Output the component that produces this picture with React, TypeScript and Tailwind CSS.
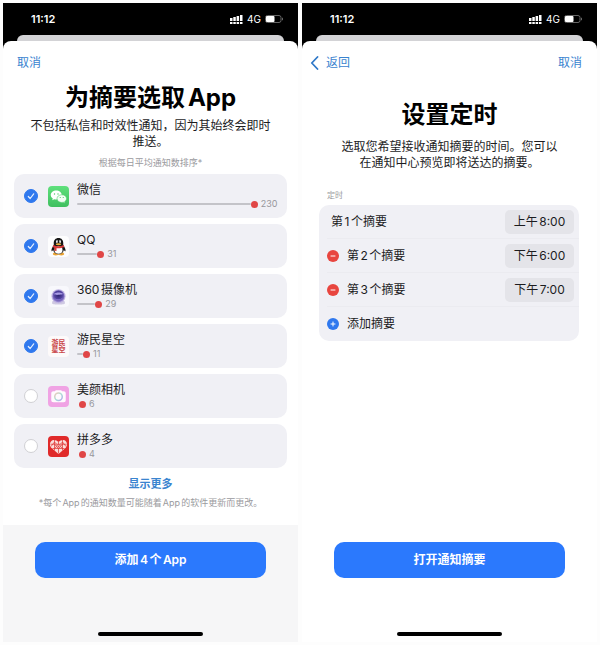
import { useState } from "react";
import type { ReactNode } from "react";

function WeChatIcon() {
  return (
    <svg viewBox="0 0 42 42" className="size-[21px] shrink-0" aria-hidden="true">
      <defs>
        <linearGradient id="wechat-green" x1="0" y1="0" x2="0" y2="1">
          <stop offset="0" stopColor="#5fe07c" />
          <stop offset="1" stopColor="#3fbf5f" />
        </linearGradient>
      </defs>
      <rect width="42" height="42" rx="8" fill="url(#wechat-green)" />
      <path d="M16.500 9C10.500 9 5.500 13 5.500 18c0 2.800 1.500 5.200 4 6.900l-1 3.600 4-2.200c1.300.4 2.600.6 4 .6 6 0 11-4 11-8.900S22.500 9 16.500 9z" fill="#fff" />
      <path d="M27.500 17.500c-5.400 0-9.500 3.400-9.500 7.700s4.100 7.700 9.500 7.700c1.200 0 2.300-.2 3.300-.5l3.300 1.900-.8-3c2.200-1.400 3.700-3.600 3.700-6.100 0-4.300-4.100-7.700-9.500-7.700z" fill="#f3fff5" stroke="#52cd6f" strokeWidth="1.200" />
      <g fill="#4bc968">
        <circle cx="13" cy="16" r="1.400" />
        <circle cx="20" cy="16" r="1.400" />
        <circle cx="24.500" cy="23" r="1.200" />
        <circle cx="30.500" cy="23" r="1.200" />
      </g>
    </svg>
  );
}

function QQIcon() {
  return (
    <svg viewBox="0 0 42 42" className="size-[21px] shrink-0" aria-hidden="true">
      <rect width="42" height="42" rx="8" fill="#fdfdfe" />
      <ellipse cx="15.500" cy="36" rx="6" ry="2.800" fill="#e9a233" />
      <ellipse cx="26.500" cy="36" rx="6" ry="2.800" fill="#e9a233" />
      <path d="M21 4c-6 0-9.500 4.500-9.500 10v4C9 21.500 6.500 26 7 29.500c.3 2 2 .8 3.300-1.300C11.500 33 15 36.500 21 36.500S30.500 33 31.700 28.200c1.300 2.100 3 3.300 3.300 1.300.5-3.500-2-8-4.500-11.500v-4C30.500 8.500 27 4 21 4z" fill="#171717" />
      <ellipse cx="21" cy="28" rx="8" ry="7.500" fill="#fff" />
      <ellipse cx="18" cy="11.500" rx="2" ry="2.900" fill="#fff" />
      <ellipse cx="24" cy="11.500" rx="2" ry="2.900" fill="#fff" />
      <circle cx="18.500" cy="12" r="1" fill="#111" />
      <circle cx="23.500" cy="12" r="1" fill="#111" />
      <ellipse cx="21" cy="16.500" rx="5.500" ry="1.900" fill="#eeb03a" />
      <path d="M10.500 18c6.500 3.500 14.500 3.500 21 0l1 4c-5 2.500-10.500 3-15.500 2.500V30l-4-.5V24c-1.200-.4-2.300-1-3.500-2z" fill="#d93a3a" />
    </svg>
  );
}

function CameraIcon() {
  return (
    <svg viewBox="0 0 42 42" className="size-[21px] shrink-0" aria-hidden="true">
      <defs>
        <radialGradient id="lens-purple" cx=".5" cy=".4" r=".6">
          <stop offset="0" stopColor="#2d2570" />
          <stop offset=".55" stopColor="#51419f" />
          <stop offset="1" stopColor="#a291d8" />
        </radialGradient>
      </defs>
      <rect width="42" height="42" rx="8" fill="#f8f8fc" />
      <path d="M9 30h24l1 4c0 2-3 3-13 3S8 36 8 34z" fill="#cfc9e2" />
      <circle cx="21" cy="20.500" r="14" fill="#bfb3e2" />
      <circle cx="21" cy="20.500" r="12" fill="url(#lens-purple)" />
      <path d="M12 16c4-4 14-4 18 0-4 1.500-7 1-9 1.500S14 18 12 16z" fill="#a99be6" />
      <path d="M13 25c5 2 11 2 16-1-2 5-13 6-16 1z" fill="#8270ca" />
    </svg>
  );
}

function GamerskyIcon() {
  return (
    <span className="flex size-[21px] shrink-0 items-center justify-center rounded-[4px] bg-[#fdfafa]">
      <span className="w-[14px] text-[7px] leading-[7px] font-bold break-all text-[#c9474b]">游民星空</span>
    </span>
  );
}

function BeautyCamIcon() {
  return (
    <svg viewBox="0 0 42 42" className="size-[21px] shrink-0" aria-hidden="true">
      <defs>
        <linearGradient id="ring-pastel" x1="0" y1="0" x2="1" y2="1">
          <stop offset="0" stopColor="#f4c6b8" />
          <stop offset=".5" stopColor="#a9dfd6" />
          <stop offset="1" stopColor="#b3a8ee" />
        </linearGradient>
      </defs>
      <rect width="42" height="42" rx="8" fill="#f0a3e4" />
      <path d="M14 10.500c.6-1.500 1.500-2 3-2h8c1.500 0 2.400.5 3 2h3c3 0 4.500 1.500 4.500 4.500v13c0 3-1.500 4.500-4.500 4.500H11c-3 0-4.500-1.500-4.500-4.500V15c0-3 1.500-4.500 4.500-4.500z" fill="#fffafe" />
      <circle cx="21" cy="21.500" r="7.500" fill="none" stroke="url(#ring-pastel)" strokeWidth="3" />
    </svg>
  );
}

function PinduoduoIcon() {
  return (
    <svg viewBox="0 0 42 42" className="size-[21px] shrink-0" aria-hidden="true">
      <rect width="42" height="42" rx="8" fill="#e02a2a" />
      <path d="M21 36 6.500 23.500C2 18 3.500 9 11.500 8c4 0 7 1.500 9.500 4 2.500-2.500 5.500-4 9.500-4 8 1 9.500 10 5 15.500z" fill="#fbdedb" />
      <g stroke="#df3a38" strokeWidth="1.500" fill="none">
        <path d="M13 8v21M29 8v21M5 16.500h32M9 25h24M13 16.500l8 8.500 8-8.500M13 25l8-8.500 8 8.500M21 25v10M21 12v5" />
        <circle cx="21" cy="20.500" r="3.500" fill="#fbdedb" />
        <path d="m6 21 7-9 4 4M36 21l-7-9-4 4" />
      </g>
      <circle cx="21" cy="20.500" r="1.400" fill="#df3a38" />
    </svg>
  );
}

function StatusBar() {
  return (
    <div className="flex h-8 items-center justify-between pr-[14px] pl-7 text-white">
      <span className="text-[11px] leading-4 font-semibold">11:12</span>
      <div className="flex items-center gap-1">
        <svg viewBox="0 0 13 9" className="h-[9px] w-[13px]" fill="#fff" aria-hidden="true">
          <path d="M0 3h2.500v3H0zM3.300 2h2.500v4H3.300zM6.600 1h2.500v5H6.600zM10 0h2.500v6H10zM0 7h2.500v2H0zM3.300 7h2.500v2H3.300zM6.600 7h2.500v2H6.600zM10 7h2.500v2H10z" />
        </svg>
        <span className="text-[10px] leading-4">4G</span>
        <svg viewBox="0 0 19 8" className="h-2 w-[19px]" aria-hidden="true">
          <rect x=".5" y=".5" width="15.500" height="7" rx="2" fill="none" stroke="#666" />
          <rect x="1" y="1" width="8.500" height="6" rx="1" fill="#fff" />
          <path d="M17 2.500c1.300.4 1.300 2.600 0 3z" fill="#777" />
        </svg>
      </div>
    </div>
  );
}

function Phone({ children, tinted, action }: { children: ReactNode; tinted?: boolean; action: string }) {
  return (
    <section className="flex min-w-0 flex-1 flex-col bg-white">
      <div className="bg-black">
        <StatusBar />
        <div className="mx-[14px] h-[6px] rounded-t-lg bg-[#d3d3d6]" />
        <div className="h-2 rounded-t-lg bg-white" />
      </div>
      <main className="flex flex-1 flex-col">{children}</main>
      <footer className={`flex flex-col items-center px-8 pt-[17px] pb-[6px] ${tinted ? "bg-[#f6f6f7]" : "bg-white"}`}>
        <button
          type="button"
          className="h-9 w-full rounded-[10px] bg-[#2b79fd] text-[12px] leading-4 font-semibold text-white"
        >
          {action}
        </button>
        <div className="mt-[54px] h-1 w-[105px] rounded-full bg-black" />
      </footer>
    </section>
  );
}

const apps = [
  { id: "wechat", name: "微信", count: 230, bar: "86%", on: true, Icon: WeChatIcon },
  { id: "qq", name: "QQ", count: 31, bar: "10%", on: true, Icon: QQIcon },
  { id: "cam360", name: "360摄像机", count: 29, bar: "9%", on: true, Icon: CameraIcon },
  { id: "gamersky", name: "游民星空", count: 11, bar: "3%", on: true, Icon: GamerskyIcon },
  { id: "beauty", name: "美颜相机", count: 6, bar: "1%", on: false, Icon: BeautyCamIcon },
  { id: "pdd", name: "拼多多", count: 4, bar: "1%", on: false, Icon: PinduoduoIcon },
];

function AppRow({ app }: { app: (typeof apps)[number] }) {
  const [on, setOn] = useState(app.on);
  const { Icon } = app;
  return (
    <li>
      <label htmlFor={app.id} className="flex h-11 items-center rounded-[10px] bg-[#f0f0f5] pr-2 pl-[10px]">
        <span className="grid size-[14px] shrink-0 place-items-center">
          <input
            id={app.id}
            type="checkbox"
            checked={on}
            onChange={() => setOn(!on)}
            className="col-start-1 row-start-1 size-[14px] appearance-none rounded-full border border-[#d0d0d4] bg-white checked:border-[#2f78ee] checked:bg-[#2f78ee]"
          />
          {on && (
            <svg viewBox="0 0 14 14" className="pointer-events-none col-start-1 row-start-1 size-[14px]" aria-hidden="true">
              <path d="m4.300 7.500 1.900 2 3.500-4.700" fill="none" stroke="#e6f0ff" strokeWidth="1.200" strokeLinecap="round" strokeLinejoin="round" />
            </svg>
          )}
        </span>
        <span className="mr-2 ml-[10px] flex">
          <Icon />
        </span>
        <span className="flex min-w-0 flex-1 flex-col">
          <span className="text-[12px] leading-4 text-[#1c1c1e]">{app.name}</span>
          <span className="flex h-3 items-center">
            <span
              className={`h-[2px] rounded-full ${app.count < 10 ? "bg-transparent" : "bg-[#c3c3c8]"}`}
              style={{ width: app.bar }}
            />
            <span className="size-[7px] shrink-0 rounded-full bg-[#e04646]" />
            <span className="ml-[3px] text-[9px] leading-3 text-[#97979c]">{app.count}</span>
          </span>
        </span>
      </label>
    </li>
  );
}

function PickApps() {
  return (
    <Phone tinted action="添加4个App">
      <nav className="flex px-[14px]">
        <button type="button" className="mt-1 text-[12px] leading-5 text-[#3a84cf]">取消</button>
      </nav>
      <h1 className="mt-[9px] text-center text-[24px] leading-8 font-bold text-black">
        为摘要选取App
      </h1>
      <p className="mt-1 px-6 text-center text-[12px] leading-4 text-[#1c1c1e]">
        不包括私信和时效性通知，因为其始终会即时推送。
      </p>
      <p className="mt-[7px] text-center text-[9px] leading-3 text-[#9a9a9e]">根据每日平均通知数排序*</p>
      <ul className="mt-[5px] flex flex-col gap-[6px] px-[11px]">
        {apps.map((app) => (
          <AppRow key={app.id} app={app} />
        ))}
      </ul>
      <button type="button" className="mt-2 self-center text-[11px] leading-4 font-semibold text-[#3a84cf]">
        显示更多
      </button>
      <p className="mt-[3px] text-center text-[9px] leading-4 text-[#9a9a9e]">
        *每个App的通知数量可能随着App的软件更新而更改。
      </p>
    </Phone>
  );
}

function RoundSign({ plus }: { plus?: boolean }) {
  return (
    <svg viewBox="0 0 12 12" className="size-3" aria-hidden="true">
      <circle cx="6" cy="6" r="6" fill={plus ? "#2f78ee" : "#e8453f"} />
      <path d={plus ? "M4 6h4M6 4v4" : "M4 6h4"} stroke="#fff" strokeWidth="1" strokeLinecap="round" />
    </svg>
  );
}

const slots = [
  { label: "第1个摘要", time: "上午8:00", removable: false },
  { label: "第2个摘要", time: "下午6:00", removable: true },
  { label: "第3个摘要", time: "下午7:00", removable: true },
];

function SetSchedule() {
  return (
    <Phone action="打开通知摘要">
      <nav className="flex justify-between pr-[15px] pl-2">
        <button type="button" className="mt-1 flex items-center gap-[7px] text-[12px] leading-5 text-[#3a84cf]">
          <svg viewBox="0 0 9 14" className="h-[14px] w-[9px]" aria-hidden="true">
            <path d="M7.500 1 1.800 7l5.700 6" fill="none" stroke="#2f78c8" strokeWidth="1.800" strokeLinecap="round" strokeLinejoin="round" />
          </svg>
          返回
        </button>
        <button type="button" className="mt-1 text-[12px] leading-5 text-[#3a84cf]">取消</button>
      </nav>
      <h1 className="mt-[26px] text-center text-[24px] leading-8 font-bold text-black">设置定时</h1>
      <p className="mt-2 px-[35px] text-center text-[12px] leading-4 text-[#1c1c1e]">
        选取您希望接收通知摘要的时间。您可以在通知中心预览即将送达的摘要。
      </p>
      <h2 className="mt-[18px] ml-[25px] text-[8px] leading-3 text-[#9a9a9e]">定时</h2>
      <ul className="mt-1 mr-[18px] ml-[17px] rounded-[10px] bg-[#f0f0f5] text-[12px] leading-4 text-[#1c1c1e]">
        {slots.map((slot) => (
          <li key={slot.label} className="h-[34px] pl-2">
            <div className="flex h-full items-center border-b border-[#ebebf0] pr-[5px]">
              {slot.removable ? (
                <button type="button" aria-label={`移除${slot.label}`} className="mr-2">
                  <RoundSign />
                </button>
              ) : (
                <span className="w-1" />
              )}
              <span className="flex-1">{slot.label}</span>
              <button type="button" className="h-6 w-[69px] rounded-[5px] bg-[#e4e4e9]">
                {slot.time}
              </button>
            </div>
          </li>
        ))}
        <li>
          <button type="button" className="flex h-[34px] w-full items-center gap-2 pl-2">
            <RoundSign plus />
            添加摘要
          </button>
        </li>
      </ul>
    </Phone>
  );
}

export default function App() {
  return (
    <div
      className="flex min-h-screen gap-1 bg-[#fdfdfd] p-[3px] font-[Inter,'Noto_Sans_CJK_SC',sans-serif] [text-autospace:normal]"
      lang="zh-CN"
    >
      <PickApps />
      <SetSchedule />
    </div>
  );
}
